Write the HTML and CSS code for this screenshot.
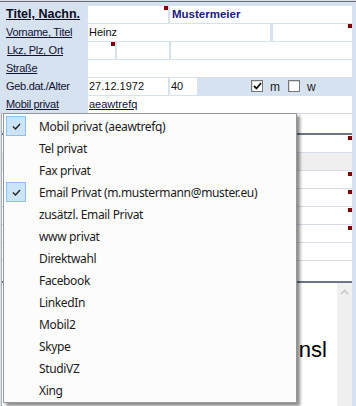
FILE: index.html
```html
<!DOCTYPE html>
<html lang="de">
<head>
  <meta charset="UTF-8">
  <title>Adresse</title>
  <link rel="stylesheet" href="styles.css">
</head>
<body>

  <div class="topline"></div>

  <!-- Stammdaten -->
  <div class="form">
    <div class="row">
      <div class="label title"><u>Titel, Nachn.</u></div>
      <div class="cells">
        <div class="cell w80"><span class="mark"></span></div>
        <div class="cell grow name">Mustermeier</div>
      </div>
    </div>

    <div class="row">
      <div class="label"><u>Vorname, Titel</u></div>
      <div class="cells gap3">
        <div class="cell w182">Heinz</div>
        <div class="cell grow"><span class="mark"></span></div>
      </div>
    </div>

    <div class="row">
      <div class="label lkz"><u>Lkz, Plz, Ort</u></div>
      <div class="cells">
        <div class="cell w27"><span class="mark"></span></div>
        <div class="cell w52"></div>
        <div class="cell grow"></div>
      </div>
    </div>

    <div class="row">
      <div class="label"><u>Straße</u></div>
      <div class="cells">
        <div class="cell grow"></div>
      </div>
    </div>

    <div class="row">
      <div class="label">Geb.dat./Alter</div>
      <div class="cells">
        <div class="cell w80">27.12.1972</div>
        <div class="cell w27">40</div>
        <div class="sex">
          <span class="box">
            <svg width="9" height="8" viewBox="0 0 9 8"><path d="M1 4 L3.5 6.5 L8 1" fill="none" stroke="#111" stroke-width="1.8"/></svg>
          </span>
          <span class="sex-label">m</span>
          <span class="box"></span>
          <span class="sex-label">w</span>
        </div>
      </div>
    </div>

    <div class="row">
      <div class="label"><u>Mobil privat</u></div>
      <div class="cells">
        <div class="cell grow link"><u>aeawtrefq</u></div>
      </div>
    </div>
  </div>

  <!-- unterer Bereich -->
  <div class="lower">
    <div class="strip"></div>
    <div class="list">
      <div class="list-row"><span class="mark"></span></div>
      <div class="list-row grey"></div>
      <div class="list-row"><span class="mark"></span></div>
      <div class="list-row"><span class="mark"></span></div>
      <div class="list-row"><span class="mark"></span></div>
      <div class="list-row"><span class="mark"></span></div>
      <div class="list-row"></div>
      <div class="list-row last"></div>
    </div>
    <div class="notes">
      <div class="notes-text">Notiz: nsl</div>
      <div class="scrollbar">
        <svg width="9" height="6" viewBox="0 0 9 6"><path d="M1 5 L4.5 1.5 L8 5" fill="none" stroke="#c4c4c4" stroke-width="1.5"/></svg>
      </div>
    </div>
  </div>

  <!-- Kontextmenü -->
  <div class="menu">
    <div class="item"><span class="check on"><svg width="9" height="7" viewBox="0 0 9 7"><path d="M1 3.5 L3.5 6 L8 1" fill="none" stroke="#222" stroke-width="1.4"/></svg></span>Mobil privat (aeawtrefq)</div>
    <div class="item"><span class="check"></span>Tel privat</div>
    <div class="item"><span class="check"></span>Fax privat</div>
    <div class="item"><span class="check on"><svg width="9" height="7" viewBox="0 0 9 7"><path d="M1 3.5 L3.5 6 L8 1" fill="none" stroke="#222" stroke-width="1.4"/></svg></span>Email Privat (m.mustermann@muster.eu)</div>
    <div class="item"><span class="check"></span>zusätzl. Email Privat</div>
    <div class="item"><span class="check"></span>www privat</div>
    <div class="item"><span class="check"></span>Direktwahl</div>
    <div class="item"><span class="check"></span>Facebook</div>
    <div class="item"><span class="check"></span>LinkedIn</div>
    <div class="item"><span class="check"></span>Mobil2</div>
    <div class="item"><span class="check"></span>Skype</div>
    <div class="item"><span class="check"></span>StudiVZ</div>
    <div class="item"><span class="check"></span>Xing</div>
  </div>

</body>
</html>
```

FILE: styles.css
```css
body {
  margin: 0;
  padding-top: 1px;
  background-color: #d6e2f0;
  font-family: "Liberation Sans", Arial, sans-serif;
  font-size: 11px;
  color: #111;
  width: 356px;
  height: 406px;
  overflow: hidden;
  position: relative;
}

.topline {
  height: 1px;
  background-color: #6f6f6f;
}

.form {
  padding-top: 3px;
}

.row {
  display: flex;
  height: 18px;
  padding-top: 1px;
  box-sizing: border-box;
}

.label {
  width: 88px;
  padding-left: 6px;
  box-sizing: border-box;
  line-height: 16px;
  letter-spacing: -0.3px;
  color: #111133;
  white-space: nowrap;
}

.label u {
  text-underline-offset: 1px;
}

.title {
  font-weight: bold;
  font-size: 12.5px;
  letter-spacing: 0;
  color: #0c0c22;
}

.lkz {
  padding-left: 7px;
}

.cells {
  flex: 1;
  display: flex;
  gap: 2px;
  margin-right: 4px;
}

.gap3 {
  gap: 3px;
}

.cell {
  position: relative;
  background-color: #ffffff;
  height: 17px;
  line-height: 17px;
  padding-left: 1px;
  box-sizing: border-box;
  white-space: nowrap;
}

.w80 { width: 80px; }
.w182 { width: 182px; }
.w27 { width: 27px; }
.w52 { width: 52px; }
.grow { flex: 1; }

.name {
  font-weight: bold;
  font-size: 11.5px;
  color: #1a1a80;
  padding-left: 2px;
}

.link {
  color: #101040;
}

.mark {
  position: absolute;
  top: 0;
  right: 0;
  width: 4px;
  height: 4px;
  background-color: #800000;
}

.sex {
  display: flex;
  align-items: center;
  height: 15px;
  margin-left: 52px;
}

.box {
  width: 12px;
  height: 12px;
  box-sizing: border-box;
  border: 1px solid #777;
  box-shadow: inset 1px 1px 0 #ddd;
  background-color: #fff;
  display: flex;
  align-items: center;
  justify-content: center;
}

.sex-label {
  margin: 2px 8px 0 7px;
  color: #222;
  font-size: 12px;
}

/* lower part, mostly hidden by the menu */
.lower {
  height: 293px;
  margin-left: 1px;
  margin-right: 4px;
  background-color: #ffffff;
  border-left: 1px solid #b0b0b0;
}

.strip {
  height: 20px;
  border-top: 1px solid #d3dbe5;
  box-sizing: border-box;
}

.list {
  border-top: 2px solid #6b7888;
}

.list-row {
  position: relative;
  height: 18px;
  border-bottom: 1px solid #d5dde8;
  box-sizing: border-box;
}

.list-row .mark {
  top: 1px;
}

.list-row.grey {
  background-color: #efefef;
}

.list-row.last {
  height: 20px;
  border-bottom: none;
}

.notes {
  display: flex;
  border-top: 2px solid #6b7888;
  height: 140px;
}

.notes-text {
  flex: 1;
  text-align: right;
  white-space: nowrap;
  padding: 55px 10px 0 0;
  font-size: 22px;
  line-height: 24px;
  color: #000;
}

.scrollbar {
  width: 15px;
  background-color: #f0f0f0;
  display: flex;
  justify-content: center;
  padding-top: 6px;
  box-sizing: border-box;
}

/* context menu */
.menu {
  position: absolute;
  left: 3px;
  top: 113px;
  width: 294px;
  height: 290px;
  box-sizing: border-box;
  padding: 1px 2px;
  background-color: #fcfcfc;
  border: 1px solid #979797;
  box-shadow: 3px 3px 3px rgba(0, 0, 0, 0.45);
  font-family: "Noto Sans", sans-serif;
  font-size: 12px;
  letter-spacing: -0.35px;
  color: #1b1b1b;
}

.item {
  display: flex;
  align-items: center;
  height: 22px;
}

.check {
  width: 20px;
  height: 20px;
  margin-right: 13px;
  box-sizing: border-box;
  display: flex;
  align-items: center;
  justify-content: center;
}

.check.on {
  background-color: #cce4f7;
  border: 1px solid #8cbfee;
}
```
